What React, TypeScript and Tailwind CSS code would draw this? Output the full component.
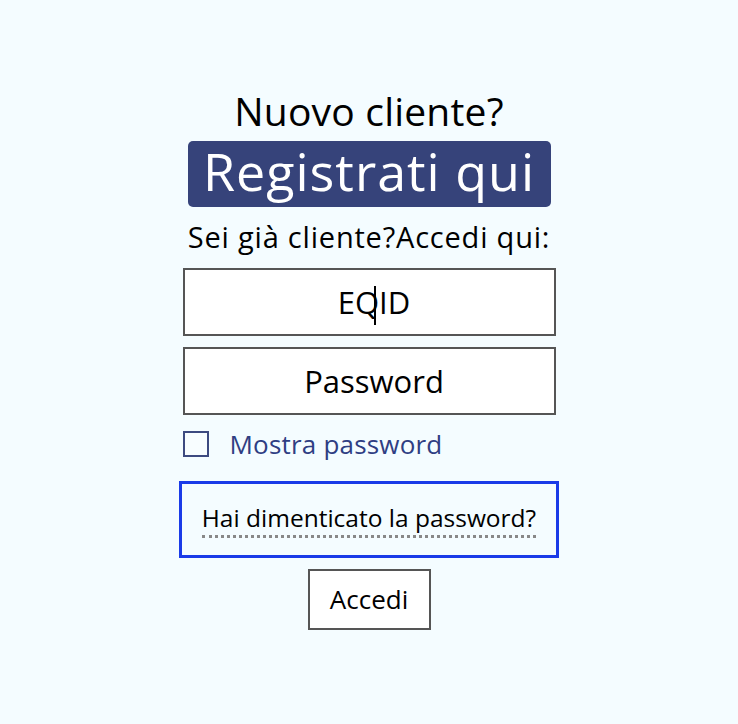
import React from 'react';

const sans = { fontFamily: '"Open Sans", "Noto Sans", sans-serif' };

export default function App() {
  return (
    <div className="min-h-[724px] w-full bg-[#f4fcff] flex flex-col items-center pt-[89px] text-black" style={sans}>
      <h2 className="text-[39px] leading-[44px] font-normal tracking-[0.2px]">Nuovo cliente?</h2>

      <a className="mt-[8px] h-[66px] w-[363px] rounded-[5px] bg-[#36437a] text-white text-[52px] leading-[60px] tracking-[1px] text-center">
        Registrati qui
      </a>

      <p className="mt-[12px] text-[29px] leading-[36px] tracking-[0.8px]">Sei già cliente?Accedi qui:</p>

      <div className="mt-[13px] flex flex-col gap-[11px] w-[373px]">
        <div className="relative h-[68px] border-2 border-[#555] bg-white flex items-center justify-center pl-[10px]">
          <span className="text-[31px] text-black">EQID</span>
          <span className="absolute left-[189px] top-[16px] h-[39px] w-[2px] bg-black" />
        </div>
        <div className="h-[68px] border-2 border-[#555] bg-white flex items-center justify-center pl-[10px]">
          <span className="text-[31px] text-black">Password</span>
        </div>
      </div>

      <label className="mt-[14px] w-[373px] flex items-center gap-[21px]">
        <span className="h-[26px] w-[26px] border-2 border-[#3d4a80] bg-white/40" />
        <span className="text-[26px] leading-[30px] tracking-[0.2px] text-[#2f3e83]">Mostra password</span>
      </label>

      <div className="mt-[22px] w-[380px] h-[77px] border-[3px] border-[#1a3be8] flex items-center justify-center">
        <span className="text-[24.5px] leading-[30px] pt-[2px] pb-[2px] border-b-[3px] border-dotted border-[#888]">
          Hai dimenticato la password?
        </span>
      </div>

      <button className="mt-[11px] h-[61px] w-[123px] border-2 border-[#555] bg-white text-[26px]">
        Accedi
      </button>
    </div>
  );
}
